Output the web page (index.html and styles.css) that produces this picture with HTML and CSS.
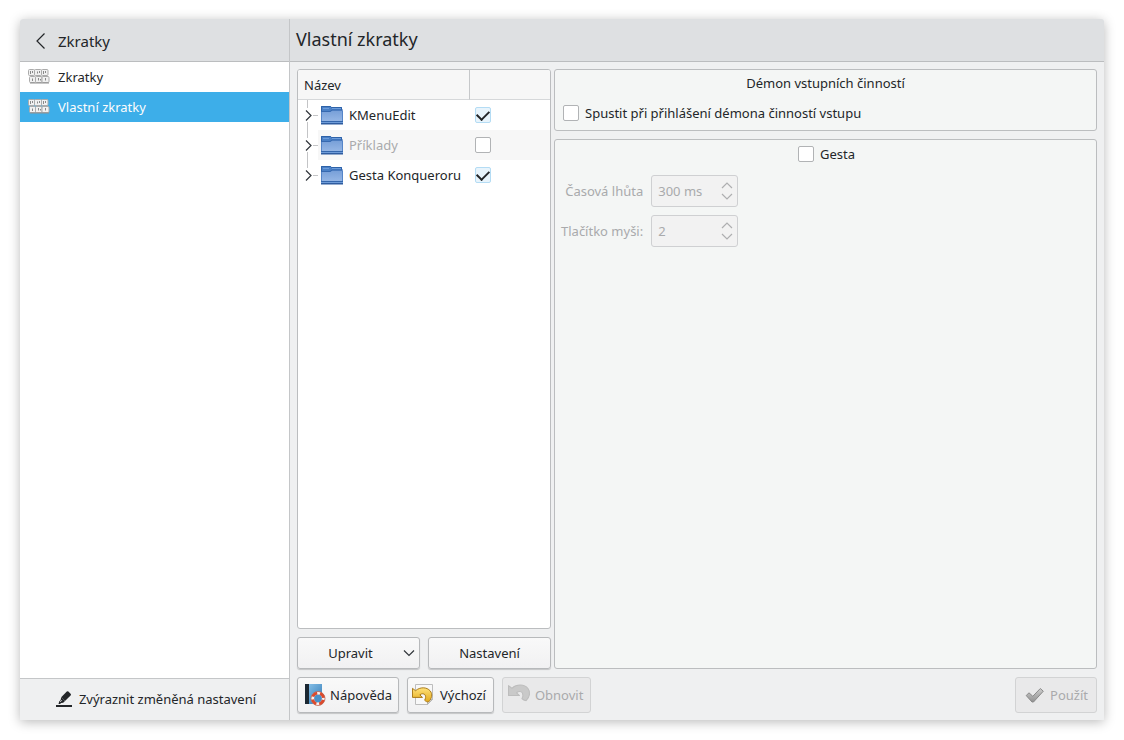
FILE: index.html
```html
<!DOCTYPE html>
<html lang="cs">
<head>
<meta charset="utf-8">
<meta name="viewport" content="width=device-width, initial-scale=1">
<title>Vlastní zkratky</title>
<link rel="stylesheet" href="styles.css">
</head>
<body>
<svg class="defs" aria-hidden="true">
  <defs>
    <linearGradient id="blue" x1="0" y1="0" x2="0" y2="1"><stop offset="0" stop-color="#779fd8"/><stop offset="1" stop-color="#9dbce8"/></linearGradient>
    <linearGradient id="book" x1="0" y1="0" x2="1" y2="1"><stop offset="0" stop-color="#8ec6ec"/><stop offset="1" stop-color="#2f78b4"/></linearGradient>
    <linearGradient id="gold" x1="0" y1="0" x2="0" y2="1"><stop offset="0" stop-color="#ffe27a"/><stop offset="1" stop-color="#e3a91a"/></linearGradient>
    <linearGradient id="grey" x1="0" y1="0" x2="0" y2="1"><stop offset="0" stop-color="#cdcdcd"/><stop offset="1" stop-color="#929292"/></linearGradient>
    <symbol id="folder" viewBox="0 0 24 22">
      <path d="M1 2h9.500l1 1H22v5H1z" fill="#4a80c6"/>
      <path d="M1.500 7.500v-5h9l1 1h10v3" fill="none" stroke="#2e62a8"/>
      <path d="M3 4.500h6M12 4.500h9" fill="none" stroke="#6d9ddb"/>
      <path d="M1 8h9.500l2-1.500H23V20H1z" fill="url(#blue)"/>
      <path d="M1 7.500h9l2-1.500h11" fill="none" stroke="#3769b0"/>
      <path d="M1.500 8v12M22.500 7v13" stroke="#5585c8"/>
      <path d="M1 17h22v1H1z" fill="#3567ad"/>
      <path d="M1 18h22v1H1z" fill="#6f9cd8"/>
      <path d="M1 19h22v1.500H1z" fill="#2f5c9f"/>
    </symbol>
    <symbol id="keys" viewBox="0 0 22 16">
      <g fill="#f1f1f1" stroke="#ababab">
        <rect x=".5" y=".5" width="6" height="6" rx="1"/><rect x="6.500" y=".5" width="7" height="6" rx="1"/><rect x="13.500" y=".5" width="6.500" height="6" rx="1"/>
        <rect x="1.500" y="7.500" width="6" height="6" rx="1"/><rect x="7.500" y="7.500" width="6.500" height="6" rx="1"/><rect x="14" y="7.500" width="7" height="6" rx="1"/>
      </g>
      <path d="M2.500 2v3M4.500 2v2M9.500 2.500v2M11.500 2v2M15.500 2v3M17.500 2v2M4.500 9.500v2.500M10.500 9v2.500M12.500 10v1.500M17.500 9v2.500" fill="none" stroke="#8a8a8a"/>
      <path d="M2 14h19" stroke="#8f8f8f"/>
    </symbol>
    <symbol id="undo" viewBox="0 0 22 22">
      <path d="M.5 3.500V13H11L8.200 10.300c2-1.600 4.600-1.500 5.600.3.800 1.500.5 3.400-.5 5.400 1.200 1.300 2.500 1.800 4 1.800 3.600-3.600 4.500-8.300 1.800-11.600C15.500 2 8.500 1.800 3.700 6z" stroke-linejoin="round"/>
    </symbol>
    <symbol id="branch" viewBox="0 0 20 30">
      <path d="M9.500 0v8M9.500 22v8M15 15.500h5" fill="none" stroke="#c3c4c6"/>
      <path d="M8 10.500l5 5-5 5" fill="none" stroke="#31363b" stroke-width="1.200"/>
    </symbol>
    <symbol id="branch-end" viewBox="0 0 20 30">
      <path d="M9.500 0v8M15 15.500h5" fill="none" stroke="#c3c4c6"/>
      <path d="M8 10.500l5 5-5 5" fill="none" stroke="#31363b" stroke-width="1.200"/>
    </symbol>
    <symbol id="steps" viewBox="0 0 12 20">
      <path d="M1 7l5-5 5 5M1 13l5 5 5-5" fill="none" stroke="#aeafb0" stroke-width="1.200"/>
    </symbol>
  </defs>
</svg>

<div class="window">
  <aside class="sidebar">
    <header class="bar">
      <button class="back" type="button">
        <svg width="22" height="22" viewBox="0 0 22 22" aria-hidden="true"><path d="M14.500 3.500 7 11l7.500 7.500" fill="none" stroke="#232629" stroke-width="1.200"/></svg>
        Zkratky
      </button>
    </header>
    <nav class="nav">
      <a class="nav-item" href="#zkratky"><svg width="22" height="16" aria-hidden="true"><use href="#keys"/></svg>Zkratky</a>
      <a class="nav-item selected" href="#vlastni" aria-current="page"><svg width="22" height="16" aria-hidden="true"><use href="#keys"/></svg>Vlastní zkratky</a>
    </nav>
    <footer class="side-foot">
      <button class="flat" type="button">
        <svg width="16" height="16" viewBox="0 0 16 16" aria-hidden="true"><path d="M0 14h16v2H0z" fill="#232629"/><path d="M10.800.6q.8-.8 1.600 0l2.200 2.200q.8.800 0 1.600L9 10 5.200 6.200z" fill="#232629"/><path d="M5.200 6.200 9 10l-1.800 1.800-2 .2L4 13H2.500l.8-2.800 1.300-1z" fill="#232629"/><path d="M4.300 10.800 5.800 9.300" stroke="#eff0f1" fill="none"/></svg>
        Zvýraznit změněná nastavení
      </button>
    </footer>
  </aside>

  <main class="main">
    <header class="bar"><h1 class="title">Vlastní zkratky</h1></header>
    <div class="content">
      <div class="split">
        <section class="left">
          <div class="tree">
            <table class="tree-table">
              <thead><tr><th class="name-col" scope="col">Název</th><th class="check-col" scope="col" aria-label="Zapnuto"></th></tr></thead>
              <tbody>
                <tr><td><div class="node"><svg class="branch" width="20" height="30" aria-hidden="true"><use href="#branch"/></svg><label class="leaf" for="k1"><svg width="24" height="22" aria-hidden="true"><use href="#folder"/></svg>KMenuEdit</label></div></td><td class="tick"><input class="check" type="checkbox" id="k1" checked></td></tr>
                <tr class="alt"><td><div class="node"><svg class="branch" width="20" height="30" aria-hidden="true"><use href="#branch"/></svg><label class="leaf off" for="k2"><svg width="24" height="22" aria-hidden="true"><use href="#folder"/></svg>Příklady</label></div></td><td class="tick"><input class="check" type="checkbox" id="k2"></td></tr>
                <tr><td><div class="node"><svg class="branch" width="20" height="30" aria-hidden="true"><use href="#branch-end"/></svg><label class="leaf" for="k3"><svg width="24" height="22" aria-hidden="true"><use href="#folder"/></svg>Gesta Konqueroru</label></div></td><td class="tick"><input class="check" type="checkbox" id="k3" checked></td></tr>
              </tbody>
            </table>
          </div>
          <div class="pair">
            <button class="btn menu" type="button" aria-haspopup="menu"><span class="menu-text">Upravit</span><svg width="12" height="8" viewBox="0 0 12 8" aria-hidden="true"><path d="M1 1.500l5 5 5-5" fill="none" stroke="#31363b" stroke-width="1.200"/></svg></button>
            <button class="btn" type="button">Nastavení</button>
          </div>
        </section>
        <section class="right">
          <div class="group daemon">
            <h2 class="group-title">Démon vstupních činností</h2>
            <label class="option" for="daemon"><input class="check" type="checkbox" id="daemon">Spustit při přihlášení démona činností vstupu</label>
          </div>
          <div class="group gestures">
            <label class="option centered" for="gesta"><input class="check" type="checkbox" id="gesta">Gesta</label>
            <div class="form">
              <label for="timeout">Časová lhůta</label>
              <div class="spin"><input class="spin-input" id="timeout" type="text" value="300 ms" disabled><svg width="12" height="20" aria-hidden="true"><use href="#steps"/></svg></div>
              <label for="mouse">Tlačítko myši:</label>
              <div class="spin"><input class="spin-input" id="mouse" type="text" value="2" disabled><svg width="12" height="20" aria-hidden="true"><use href="#steps"/></svg></div>
            </div>
          </div>
        </section>
      </div>
      <footer class="actions">
        <button class="btn tall" type="button">
          <svg width="22" height="22" viewBox="0 0 22 22" aria-hidden="true"><path d="M1 0h17v20H1z" fill="url(#book)"/><path d="M1 0h4v20H1z" fill="#1c2833"/><circle cx="14" cy="14.500" r="5.500" fill="#4a90c8" stroke="#fbf1ee" stroke-width="3.200"/><circle cx="14" cy="14.500" r="5.500" fill="none" stroke="#dd4a2c" stroke-width="2.800" stroke-dasharray="5.640 3" stroke-dashoffset="-1.500"/><circle cx="14" cy="14.500" r="7" fill="none" stroke="#b5503e" stroke-width=".7"/></svg>
          Nápověda</button>
        <button class="btn tall undo" type="button">
          <svg width="24" height="22" viewBox="0 0 24 22" aria-hidden="true"><path d="M3.500.5h17v15l-5 5h-12z" fill="#f8f8f8" stroke="#bdbdbd"/><path d="M20.500 15.500h-5v5z" fill="#e4e4e4" stroke="#b5b5b5"/><use href="#undo" y="1" width="21" height="21" fill="url(#gold)" stroke="#a77715"/></svg>
          Výchozí</button>
        <button class="btn tall undo" type="button" disabled>
          <svg width="24" height="22" viewBox="0 0 24 22" aria-hidden="true"><use href="#undo" x="1" y="-2" width="23" height="23" fill="#c9c9c9" stroke="#bdbdbd"/></svg>
          Obnovit</button>
        <button class="btn tall apply" type="button" disabled>
          <svg width="22" height="22" viewBox="0 0 22 22" aria-hidden="true"><path d="M2.200 11.500 5 8.800l3.800 3.500 7.500-7.800 3 2.700L9.500 18H8z" fill="url(#grey)" stroke="#8a8a8a" stroke-linejoin="round"/></svg>
          Použít</button>
      </footer>
    </div>
  </main>
</div>
</body>
</html>
```

FILE: styles.css
```css
* { box-sizing: border-box; }
body {
  margin: 0;
  padding: 19px 20px 20px;
  min-height: 100vh;
  display: flex;
  background: #fff;
  color: #232629;
  font: 13px/18px "Noto Sans", sans-serif;
}
button, input { font: inherit; color: inherit; }
.defs { position: absolute; width: 0; height: 0; }
svg { flex: none; display: block; }

.window {
  flex: 1;
  display: grid;
  grid-template-columns: 270px 1fr;
  background: #eff0f1;
  border-radius: 3px 3px 0 0;
  box-shadow: 0 2px 12px rgba(0, 0, 0, .28);
}
.bar {
  height: 43px;
  display: flex;
  align-items: center;
  background: #dee0e2;
  border-bottom: 1px solid #bbbdbf;
}
.sidebar {
  display: flex;
  flex-direction: column;
  border-right: 1px solid #c4c6c8;
  background: #fff;
  border-radius: 3px 0 0 0;
}
.sidebar .bar { border-radius: 3px 0 0 0; }
.main .bar { border-radius: 0 3px 0 0; }
.back {
  display: flex;
  align-items: center;
  gap: 6px;
  padding: 2px 10px 0;
  border: 0;
  background: none;
  font-size: 15px;
}
.title { margin: 0; padding: 0 6px 2px; font-size: 18px; font-weight: 400; line-height: 24px; }
.nav { flex: 1; }
.nav-item {
  display: flex;
  align-items: center;
  gap: 8px;
  height: 30px;
  padding: 0 8px;
  color: inherit;
  text-decoration: none;
}
.nav-item.selected { background: #3daee9; color: #fcfcfc; }
.side-foot {
  display: flex;
  align-items: center;
  justify-content: center;
  height: 42px;
  background: #eff0f1;
  border-top: 1px solid #c4c6c8;
}
.flat { display: flex; align-items: center; gap: 7px; padding: 0 0 2px 3px; border: 0; background: none; white-space: nowrap; }

.main { display: flex; flex-direction: column; min-width: 0; }
.content { flex: 1; display: flex; flex-direction: column; gap: 8px; padding: 7px; }
.split { flex: 1; display: grid; grid-template-columns: 254px 1fr; gap: 3px; }
.left, .right { display: flex; flex-direction: column; gap: 8px; min-width: 0; }
.tree { flex: 1; background: #fff; border: 1px solid #bbbdbf; border-radius: 3px; overflow: hidden; }
.tree-table { width: 100%; border-collapse: separate; border-spacing: 0; table-layout: fixed; }
.tree-table th {
  height: 30px;
  padding: 0 6px;
  text-align: left;
  font-weight: 400;
  background: #f7f7f7;
  border-bottom: 1px solid #d6d8da;
}
.tree-table .name-col { width: 172px; border-right: 1px solid #c6c8ca; }
.tree-table td { padding: 0; height: 30px; }
.node { display: flex; }
.leaf { flex: 1; display: flex; align-items: center; gap: 5px; padding-left: 2px; white-space: nowrap; }
.alt .leaf, .alt .tick { background: #f7f7f7; }
.off { color: #a9aaac; }
.tree-table .tick { padding-left: 5px; }
.check {
  appearance: none;
  flex: none;
  display: block;
  width: 16px;
  height: 16px;
  margin: 0;
  background: #fff;
  border: 1px solid #b1b3b5;
  border-radius: 2px;
}
.check:checked { background: #e8f4fc; border-color: #b4dcf4; }
.check:checked::before {
  content: "";
  display: block;
  width: 10px;
  height: 6px;
  margin: 3px 2px;
  border: solid #232629;
  border-width: 0 0 2px 2px;
  transform: translate(-1px, -1px) rotate(-45deg);
}

.pair { display: grid; grid-template-columns: 1fr 1fr; gap: 8px; }
.btn {
  display: flex;
  align-items: center;
  justify-content: center;
  gap: 4px;
  height: 32px;
  padding: 0 6px;
  border: 1px solid #b7b9bb;
  border-radius: 3px;
  background: linear-gradient(#f9f9f9, #f1f1f2);
  box-shadow: 0 1px 1px rgba(0, 0, 0, .18);
  white-space: nowrap;
}
.menu { padding: 0 4px; }
.menu-text { flex: 1; }
.tall { height: 36px; }
.undo { padding: 0 7px 0 4px; }
.btn:disabled { background: #e9e9ea; border-color: #d2d3d4; color: #a9aaac; box-shadow: none; }
.actions { display: flex; gap: 8px; }
.apply { margin-left: auto; padding: 0 8px; }

.group { background: #f4f6f5; border: 1px solid #bbbdbf; border-radius: 3px; }
.daemon { height: 62px; padding: 4px 8px; }
.group-title { margin: 0 0 12px; font-size: 13px; font-weight: 400; text-align: center; }
.option { display: flex; align-items: center; gap: 6px; }
.centered { justify-content: center; padding-left: 2px; }
.gestures { flex: 1; padding: 5px 6px; }
.form {
  display: grid;
  grid-template-columns: auto 87px;
  justify-content: start;
  align-items: center;
  gap: 8px;
  margin-top: 12px;
  color: #a9aaac;
  text-align: right;
}
.spin {
  display: flex;
  align-items: center;
  height: 32px;
  padding: 0 4px 0 6px;
  border: 1px solid #cfd0d2;
  border-radius: 3px;
  background: #f2f2f2;
}
.spin-input { flex: 1; min-width: 0; padding: 0; border: 0; background: none; color: #a9aaac; }
```
